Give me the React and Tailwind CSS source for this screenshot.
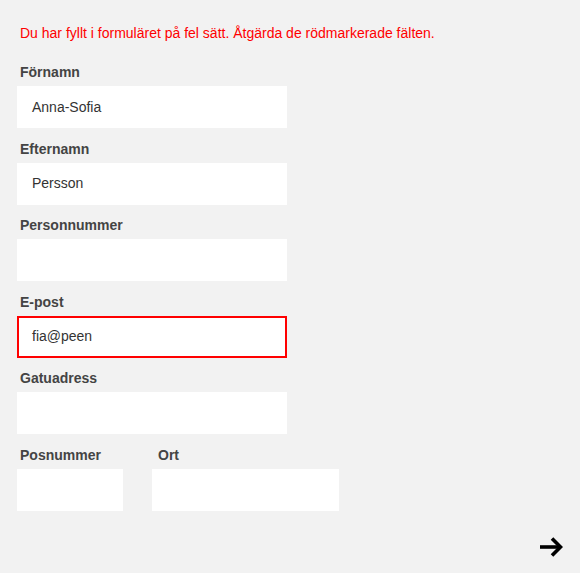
import React from "react";

const font = { fontFamily: '"Liberation Sans", Arial, sans-serif' };

function Field({ label, value, error, width = "w-[270px]" }) {
  return (
    <div className="flex flex-col">
      <label className="pl-[3px] text-[14px] leading-[17px] font-bold text-[#444444] mb-[5px]">{label}</label>
      <div
        className={
          error
            ? `${width} h-[42px] bg-white flex items-center pl-[13px] text-[14px] text-[#333333] border-2 border-[#ff0000]`
            : `${width} h-[42px] bg-white flex items-center pl-[15px] text-[14px] text-[#333333]`
        }
      >
        {value}
      </div>
    </div>
  );
}

export default function App() {
  return (
    <div className="w-full min-h-screen h-[573px] bg-[#f2f2f2] px-[17px] pt-[25px] flex flex-col" style={font}>
      <p className="pl-[3px] text-[14px] leading-[17px] text-[#ff0000]">
        Du har fyllt i formuläret på fel sätt. Åtgärda de rödmarkerade fälten.
      </p>
      <div className="mt-[22px] flex flex-col gap-[12.5px]">
        <Field label="Förnamn" value="Anna-Sofia" />
        <Field label="Efternamn" value="Persson" />
        <Field label="Personnummer" value="" />
        <Field label="E-post" value="fia@peen" error />
        <Field label="Gatuadress" value="" />
        <div className="flex gap-[29px]">
          <Field label="Posnummer" value="" width="w-[106px]" />
          <div className="flex flex-col">
            <label className="pl-[6px] text-[14px] leading-[17px] font-bold text-[#444444] mb-[5px]">Ort</label>
            <div className="w-[187px] h-[42px] bg-white" />
          </div>
        </div>
      </div>
      <div className="flex justify-end mt-[25px]">
        <svg width="24" height="22" viewBox="0 0 24 22" fill="none">
          <path d="M1 11 H21" stroke="#000" strokeWidth="3.6" />
          <path d="M13 2.5 L21.5 11 L13 19.5" stroke="#000" strokeWidth="3.6" strokeLinejoin="miter" />
        </svg>
      </div>
    </div>
  );
}
